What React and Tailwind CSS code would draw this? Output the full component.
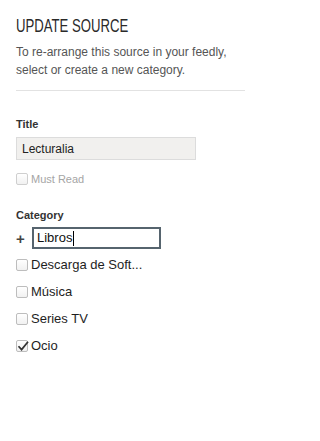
import React from 'react';

const Box = ({ checked, faded }) => (
  <span
    className={`relative flex h-[12px] w-[12px] shrink-0 items-center justify-center rounded-[2px] border bg-gradient-to-b from-white to-[#f1f1f1] ${
      faded ? 'border-[#cfcfcf]' : 'border-[#bdbdbd]'
    }`}
  >
    {checked && (
      <svg viewBox="0 0 12 12" className="absolute left-[0px] top-[-1px] h-[12px] w-[12px]">
        <path d="M1.5 6.2 L4.6 9.6 L11 1.8" fill="none" stroke="#333" strokeWidth="1.7" />
      </svg>
    )}
  </span>
);

const categories = [
  { name: 'Descarga de Soft...', checked: false },
  { name: 'Música', checked: false },
  { name: 'Series TV', checked: false },
  { name: 'Ocio', checked: true },
];

const App = () => {
  return (
    <div className="min-h-[441px] w-[259px] bg-white pl-4 pr-[14px] pt-[15px] font-['Liberation_Sans',Arial,sans-serif]">
      <h1 className="h-[22px] whitespace-nowrap text-[18px] leading-[22px] text-[#2a2a2a]">
        <span className="inline-block origin-left scale-x-[0.73]">UPDATE SOURCE</span>
      </h1>
      <p className="mt-[6px] text-[12px] leading-[18px] text-[#555]">
        To re-arrange this source in your feedly,
        <br />
        select or create a new category.
      </p>
      <div className="mt-[11px] h-px bg-[#e2e2e2]" />

      <div className="mt-[26px] text-[11px] font-bold leading-[14px] text-[#333]">Title</div>
      <div className="mt-[6px] flex h-[23px] w-[180px] items-center border border-[#dcdcdc] bg-[#f1f0ee] px-[5px] text-[12px] text-[#222]">
        Lecturalia
      </div>
      <div className="mt-[11px] flex h-[16px] items-center gap-[3px]">
        <Box faded />
        <span className="text-[11px] text-[#a5a5a5]">Must Read</span>
      </div>

      <div className="mt-[21px] text-[11px] font-bold leading-[14px] text-[#333]">Category</div>
      <div className="mt-[5px] flex items-center">
        <span className="flex w-[16px] items-center text-[15px] font-bold leading-none text-[#444]">+</span>
        <div className="flex h-[22px] w-[129px] items-center border-2 border-[#56646e] pl-[3px] text-[13px] text-[#111]">
          Libros
          <span className="ml-px h-[15px] w-px bg-black" />
        </div>
      </div>

      <div className="mt-[2px] flex flex-col">
        {categories.map(c => (
          <div key={c.name} className="flex h-[27px] items-center gap-[3px]">
            <Box checked={c.checked} />
            <span className="text-[13px] text-[#1e1e1e]">{c.name}</span>
          </div>
        ))}
      </div>
    </div>
  );
};

export default App;
